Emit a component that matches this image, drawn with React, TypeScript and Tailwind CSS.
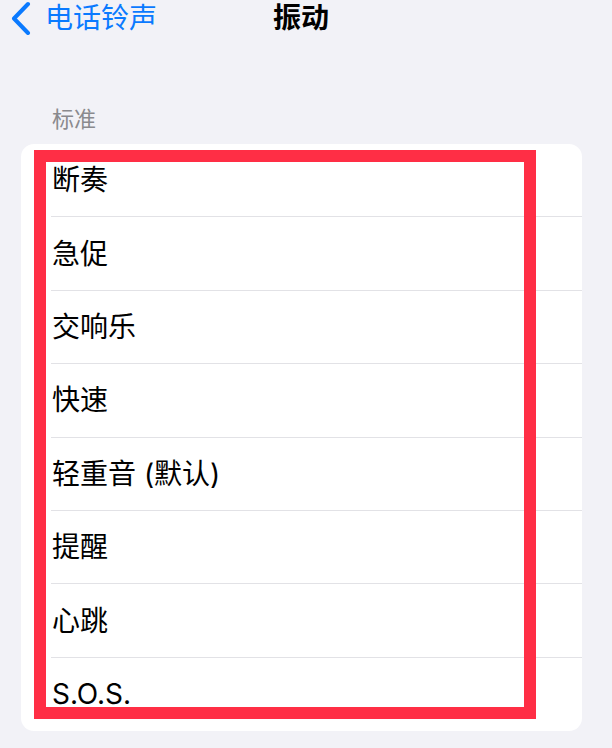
import React from "react";

const rows = ["断奏", "急促", "交响乐", "快速", "轻重音 (默认)", "提醒", "心跳", "S.O.S."];

export default function App() {
  return (
    <div
      className="relative w-[612px] h-[748px] overflow-hidden bg-[#f2f2f7]"
      style={{ fontFamily: 'Inter, "Noto Sans CJK SC", sans-serif' }}
    >
      <div className="relative flex h-[36px] items-center">
        <div className="flex items-center pl-[9px]">
          <svg width="24" height="34" viewBox="0 0 24 34" fill="none">
            <polyline
              points="19,3 5,17.5 19,32"
              stroke="#0a7aff"
              strokeWidth="4"
              strokeLinecap="round"
              strokeLinejoin="round"
            />
          </svg>
          <span className="ml-[12px] text-[28px] leading-none text-[#0a7aff]">电话铃声</span>
        </div>
        <div className="absolute left-[273px] top-0 flex h-[36px] items-center text-[28px] font-bold leading-none text-black">
          振动
        </div>
      </div>
      <div className="mt-[72px] pl-[52px] text-[22px] leading-none text-[#8a8a8e]">标准</div>
      <div className="ml-[21px] mt-[14px] w-[561px] overflow-hidden rounded-[13px] bg-white">
        {rows.map((r, i) => (
          <div key={r} className="flex h-[73.4px] flex-col">
            <div className="flex flex-1 items-center pl-[31px] text-[28px] leading-none text-black">{r}</div>
            {i < rows.length - 1 && <div className="ml-[30px] h-px bg-[#e2e2e6]" />}
          </div>
        ))}
      </div>
      <div className="absolute left-[34px] top-[150px] h-[569px] w-[502px] border-[12px] border-[#ff2e45]" />
    </div>
  );
}
